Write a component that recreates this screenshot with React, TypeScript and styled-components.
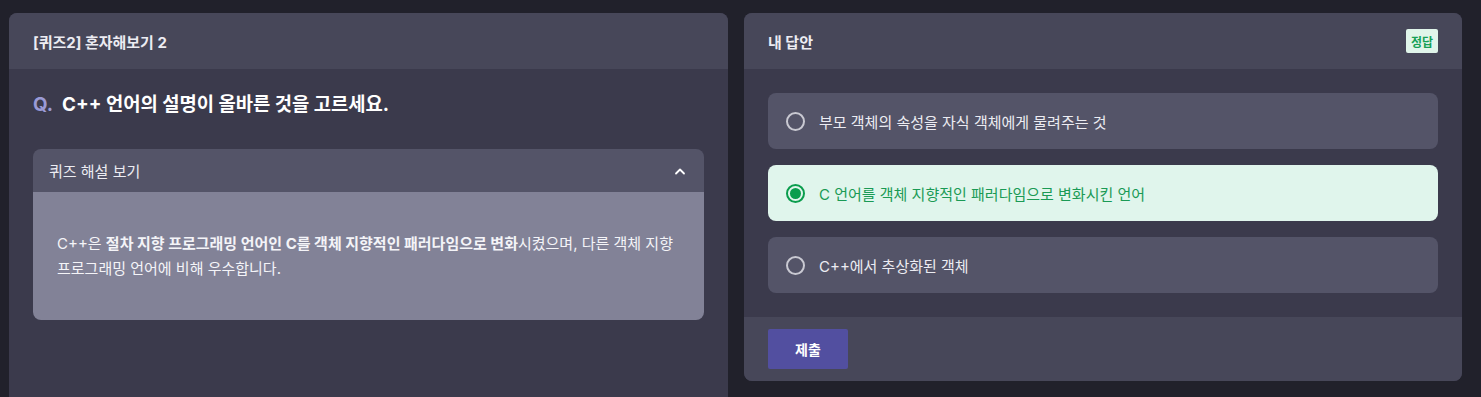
import styled, { createGlobalStyle } from "styled-components";

const GlobalStyle = createGlobalStyle`
html, body {
  margin: 0;
  padding: 0;
  overflow: hidden;
  background: #21212b;
}
body {
  font-family: Inter, "Noto Sans CJK KR", sans-serif;
  color: #ececf2;
}
* { box-sizing: border-box; }
`;

const Page = styled.main`
display: grid;
grid-template-columns: 719px 718px;
column-gap: 16px;
align-items: start;
padding: 13px 19px 0 9px;
`;

const Panel = styled.section<{ $tall?: boolean }>`
background: #3b3a4c;
border-radius: 8px;
overflow: hidden;
display: flex;
flex-direction: column;
min-height: ${(p) => (p.$tall ? "420px" : "auto")};
`;

const PanelHeader = styled.header`
height: 56px;
padding: 0 24px;
background: #474759;
display: flex;
align-items: center;
justify-content: space-between;
`;

const PanelTitle = styled.h2`
margin: 0;
font-size: 15px;
font-weight: 700;
color: #ececf2;
`;

const Badge = styled.span`
height: 24px;
padding: 0 5px;
border-radius: 2px;
background: #e0f5ea;
color: #16a055;
font-size: 12px;
font-weight: 700;
display: flex;
align-items: center;
`;

const PanelBody = styled.div`
padding: 24px;
`;

const Question = styled.h1`
margin: 0 0 32px;
display: flex;
gap: 9px;
font-size: 18.8px;
line-height: 24px;
font-weight: 700;
color: #ffffff;
`;

const QMark = styled.span`
color: #9a9ad6;
`;

const Accordion = styled.div`
border-radius: 8px;
overflow: hidden;
`;

const AccordionHead = styled.div`
height: 43px;
padding: 0 18px 0 16px;
background: #545468;
display: flex;
align-items: center;
justify-content: space-between;
font-size: 15px;
color: #ececf2;
`;

const AccordionBody = styled.div`
background: #828297;
padding: 39px 16px 39px 24px;
font-size: 15px;
line-height: 25px;
color: #f4f4f8;
white-space: nowrap;
b { font-weight: 700; }
`;

const OptionList = styled.div`
display: flex;
flex-direction: column;
gap: 16px;
`;

const Option = styled.label<{ $selected?: boolean }>`
height: 56px;
padding: 0 20px 0 18px;
border-radius: 8px;
display: flex;
align-items: center;
gap: 14px;
font-size: 15px;
background: ${(p) => (p.$selected ? "#e0f5ec" : "#545468")};
color: ${(p) => (p.$selected ? "#1a9a55" : "#ececf2")};
`;

const Radio = styled.span<{ $selected?: boolean }>`
width: 19px;
height: 19px;
border-radius: 50%;
border: 2px solid ${(p) => (p.$selected ? "#0a9d4d" : "#c9c9d2")};
display: flex;
align-items: center;
justify-content: center;
&::after {
  content: "";
  width: 11px;
  height: 11px;
  border-radius: 50%;
  background: ${(p) => (p.$selected ? "#0a9d4d" : "transparent")};
}
`;

const Footer = styled.footer`
height: 64px;
padding: 12px 24px;
background: #474759;
`;

const SubmitButton = styled.button`
width: 80px;
height: 40px;
border: 0;
border-radius: 2px;
background: #524fa0;
color: #ffffff;
font-family: inherit;
font-size: 14px;
font-weight: 700;
`;

const ChevronUp = () => (
  <svg width="12" height="8" viewBox="0 0 12 8" fill="none">
    <path d="M2 6.5 6 2.5 10 6.5" stroke="#ffffff" strokeWidth="1.8" strokeLinecap="round" strokeLinejoin="round" />
  </svg>
);

const options = [
  { text: "부모 객체의 속성을 자식 객체에게 물려주는 것", selected: false },
  { text: "C 언어를 객체 지향적인 패러다임으로 변화시킨 언어", selected: true },
  { text: "C++에서 추상화된 객체", selected: false },
];

export default function App() {
  return (
    <>
      <GlobalStyle />
      <Page>
        <Panel $tall>
          <PanelHeader>
            <PanelTitle>[퀴즈2] 혼자해보기 2</PanelTitle>
          </PanelHeader>
          <PanelBody>
            <Question>
              <QMark>Q.</QMark>
              <span>C++ 언어의 설명이 올바른 것을 고르세요.</span>
            </Question>
            <Accordion>
              <AccordionHead>
                <span>퀴즈 해설 보기</span>
                <ChevronUp />
              </AccordionHead>
              <AccordionBody>
                C++은 <b>절차 지향 프로그래밍 언어인 C를 객체 지향적인 패러다임으로 변화</b>시켰으며, 다른 객체 지향
                <br />
                프로그래밍 언어에 비해 우수합니다.
              </AccordionBody>
            </Accordion>
          </PanelBody>
        </Panel>
        <Panel>
          <PanelHeader>
            <PanelTitle>내 답안</PanelTitle>
            <Badge>정답</Badge>
          </PanelHeader>
          <PanelBody>
            <OptionList>
              {options.map((o) => (
                <Option key={o.text} $selected={o.selected}>
                  <Radio $selected={o.selected} />
                  {o.text}
                </Option>
              ))}
            </OptionList>
          </PanelBody>
          <Footer>
            <SubmitButton>제출</SubmitButton>
          </Footer>
        </Panel>
      </Page>
    </>
  );
}
